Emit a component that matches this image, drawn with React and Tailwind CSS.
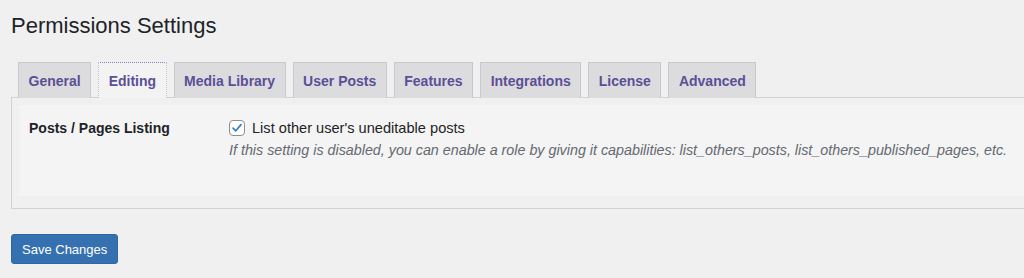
import React, { useState } from 'react';

const tabs = ['General', 'Editing', 'Media Library', 'User Posts', 'Features', 'Integrations', 'License', 'Advanced'];

// Tab strip above the settings panel
const Tab = ({ label, active, onClick }) => (
  <button
    onClick={onClick}
    className={`h-[36px] px-[9.5px] border border-b-0 text-[14px] font-semibold text-[#5b4f97] leading-none ${
      active ? 'bg-[#f3f3f3] border-[#c3c4c7] border-t-[#8c7fc4] border-dotted border-t' : 'bg-[#dcdcde] border-[#c9c9cc]'
    }`}
  >
    {label}
  </button>
);

const App = () => {
  const [activeTab, setActiveTab] = useState('Editing');
  const [listOthers, setListOthers] = useState(true);

  return (
    <div className="min-h-[278px] bg-[#f0f0f1] text-[#1d2327] font-['Liberation_Sans',Arial,sans-serif] pt-[11px] overflow-hidden">
      {/* Page title */}
      <h1 className="ml-[11px] text-[22px] leading-[30px] font-normal text-[#1d2327]">Permissions Settings</h1>

      {/* Tabs */}
      <div className="mt-[21px] ml-[18px] flex gap-[7px] items-end">
        {tabs.map((t) => (
          <Tab key={t} label={t} active={t === activeTab} onClick={() => setActiveTab(t)} />
        ))}
      </div>

      {/* Settings panel */}
      <div className="ml-[11px] -mt-px border border-r-0 border-[#d2d2d4] pt-[7px] pl-[7px] pb-[12px]">
        <div className="bg-[#f4f4f4] h-[91px] pl-[10px] pt-[13px] flex">
          <div className="w-[200px] text-[14px] font-semibold leading-[20px]">Posts / Pages Listing</div>
          <div className="flex flex-col">
            <label className="flex items-center gap-[7px] text-[14.6px] leading-[20px]">
              <span
                onClick={() => setListOthers(!listOthers)}
                className="w-[16px] h-[16px] rounded-[4px] border border-[#8c8f94] bg-white flex items-center justify-center cursor-pointer"
              >
                {listOthers && (
                  <svg viewBox="0 0 16 16" className="w-[14px] h-[14px]">
                    <path d="M3.5 8.2 L6.6 11.2 L12.6 4.2" fill="none" stroke="#3582c4" strokeWidth="2" strokeLinecap="round" strokeLinejoin="round" />
                  </svg>
                )}
              </span>
              List other user's uneditable posts
            </label>
            <p className="mt-[2px] text-[14.3px] italic text-[#646970] leading-[20px]">
              If this setting is disabled, you can enable a role by giving it capabilities: list_others_posts, list_others_published_pages, etc.
            </p>
          </div>
        </div>
      </div>

      {/* Submit */}
      <div className="ml-[11px] mt-[25px]">
        <button className="h-[30px] px-[10px] rounded-[3px] bg-[#3571b0] text-white text-[13px] leading-none border border-[#2f68a5]">
          Save Changes
        </button>
      </div>
    </div>
  );
};

export default App;
